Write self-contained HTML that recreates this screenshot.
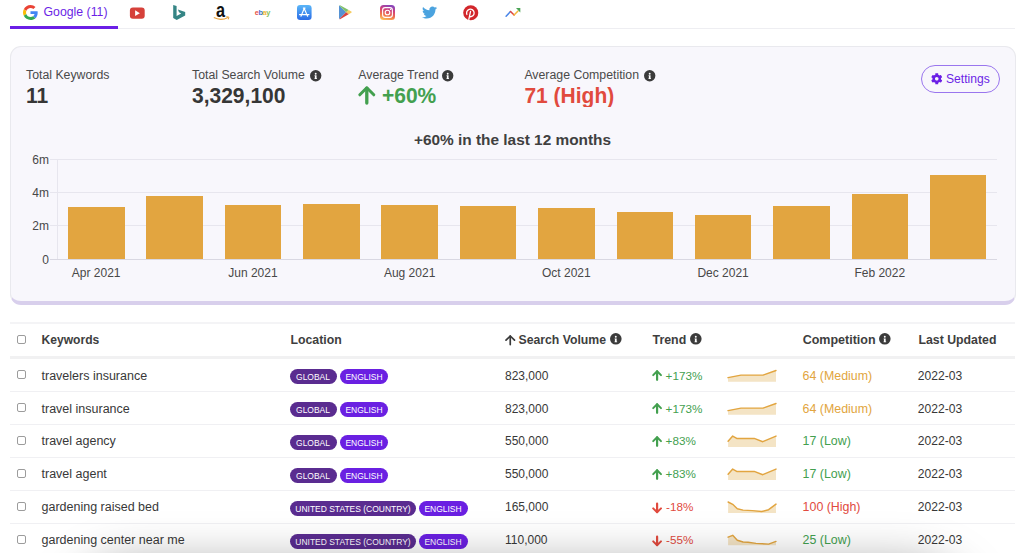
<!DOCTYPE html>
<html><head><meta charset="utf-8"><style>
*{box-sizing:border-box;margin:0;padding:0}
html,body{width:1024px;height:553px;overflow:hidden;background:#fff;font-family:"Liberation Sans",sans-serif;color:#333}
.a{position:absolute;white-space:nowrap}
.s{position:absolute;overflow:visible}
.lbl{font-size:12.3px;color:#4a4a4a;top:67.5px}
.val{font-size:21px;font-weight:bold;color:#363636;top:83.5px;transform:scaleY(1.06);transform-origin:0 100%}
.grid{position:absolute;left:50px;width:947px;height:1px;background:#e7e6ee}
.ylab{position:absolute;left:9px;width:40px;text-align:right;font-size:12px;color:#484848}
.bar{position:absolute;width:56.5px;background:#e2a540}
.xlab{position:absolute;width:100px;text-align:center;font-size:12px;color:#484848;top:266px}
.th{font-weight:bold;color:#3e3e3e;top:332.8px}
.hr{position:absolute;left:10px;width:1005px;height:1px;background:#f0f0f3}
.cb{position:absolute;left:16.8px;width:9.6px;height:9.6px;border:1px solid #9c9c9c;border-radius:2px;background:#fff}
.td{color:#383838}
.badge{position:absolute;height:15px;border-radius:7.5px;color:#fff;line-height:15px;text-align:center;white-space:nowrap;overflow:visible}
.badge span{position:absolute;left:50%;top:0.2px;font-size:9.7px;transform:translateX(-50%) scaleX(0.875);transform-origin:50% 50%}
.b1{background:#5a2c90}
.b2{background:#6a20e2}
.up{color:#43a04f}
.dn{color:#e14a3e}
.med{color:#e2a540}
</style></head><body>
<div class="a" style="left:10px;top:28px;width:1005px;height:1px;background:#eeeef2"></div>
<div class="a" style="left:10px;top:26px;width:108px;height:2.6px;background:#6b1fe6"></div>
<div class="a" style="left:43.5px;top:5px;font-size:12.3px;color:#6b1fe6">Google (11)</div>
<svg class="s" style="left:22.5px;top:5px" width="15" height="15" viewBox="0 0 48 48"><path fill="#EA4335" d="M24 9.5c3.54 0 6.71 1.22 9.21 3.6l6.85-6.85C35.9 2.38 30.47 0 24 0 14.62 0 6.51 5.38 2.56 13.22l7.98 6.19C12.43 13.72 17.74 9.5 24 9.5z"/><path fill="#4285F4" d="M46.98 24.55c0-1.57-.15-3.09-.38-4.55H24v9.02h12.94c-.58 2.96-2.26 5.48-4.78 7.18l7.73 6c4.51-4.18 7.09-10.36 7.09-17.65z"/><path fill="#FBBC05" d="M10.53 28.59c-.48-1.45-.76-2.99-.76-4.59s.27-3.14.76-4.59l-7.98-6.19C.92 16.46 0 20.12 0 24c0 3.88.92 7.54 2.56 10.78l7.97-6.19z"/><path fill="#34A853" d="M24 48c6.48 0 11.93-2.13 15.89-5.81l-7.73-6c-2.15 1.45-4.92 2.3-8.16 2.3-6.26 0-11.57-4.22-13.47-9.91l-7.98 6.19C6.51 42.62 14.62 48 24 48z"/></svg>
<svg class="s" style="left:129px;top:6.5px" width="16" height="12" viewBox="0 0 16 12"><rect x="0.9" y="0.5" width="14.8" height="11.3" rx="3" fill="#d6413a"/><path d="M6.1 3.3 L10.9 6.2 L6.1 9.1 Z" fill="#fff"/></svg>
<svg class="s" style="left:173px;top:5px" width="13" height="15" viewBox="0 0 13 15"><path fill="#358585" d="M0.2 0 L3.6 1.1 V10.9 L8.2 8.4 L6 7.3 L4.9 4.6 L12.2 7 V10.4 L3.7 15 L0.2 13 Z"/></svg>
<div class="a" style="left:215.6px;top:-1px;font-size:15.5px;line-height:18px;font-weight:bold;color:#111;transform:scaleX(1.05) scaleY(1.27);transform-origin:0 0">a</div>
<svg class="s" style="left:212.5px;top:14.8px" width="17" height="6" viewBox="0 0 17 6"><path d="M0.8 2.6 Q8 6.2 15 2.4" stroke="#e9a23b" stroke-width="1.1" fill="none"/><path d="M13.3 1.7 L15.9 2.1 L15.3 4.4" stroke="#e9a23b" stroke-width="1" fill="none"/></svg>
<div class="a" style="left:254.8px;top:8.4px;font-size:7.4px;letter-spacing:-0.45px;font-weight:bold"><span style="color:#e8534a">e</span><span style="color:#3b6fd0">b</span><span style="color:#f0b73a">a</span><span style="color:#86bf5a">y</span></div>
<svg class="s" style="left:296.6px;top:5.1px" width="14.6" height="15" viewBox="0 0 15 15" preserveAspectRatio="none"><defs><linearGradient id="ap" x1="0" y1="0" x2="0" y2="1"><stop offset="0" stop-color="#5ab6f8"/><stop offset="1" stop-color="#2b6ce6"/></linearGradient></defs><rect width="15" height="15" rx="3.3" fill="url(#ap)"/><path d="M7.4 3.6 L4.1 11.2 M7.4 3.6 L10.9 11.2 M2.6 9.6 H12.3 M6.5 3.1 H8.3" stroke="#fff" stroke-width="1.15" stroke-linecap="round" fill="none"/></svg>
<svg class="s" style="left:339.1px;top:5.4px" width="13" height="14.4" viewBox="0 0 14 15" preserveAspectRatio="none"><path d="M0.4 0.4 L7.6 7.5 L0.4 14.6 Q0 14.2 0 13.6 V1.4 Q0 0.8 0.4 0.4Z" fill="#5592d3"/><path d="M0.4 0.4 Q0.9 0 1.6 0.4 L10.4 5.3 L7.6 7.5Z" fill="#80c06a"/><path d="M10.4 5.3 L13.3 6.9 Q14 7.5 13.3 8.1 L10.4 9.7 L7.6 7.5Z" fill="#f5cc62"/><path d="M0.4 14.6 L7.6 7.5 L10.4 9.7 L1.6 14.6 Q0.9 15 0.4 14.6Z" fill="#d9433e"/></svg>
<svg class="s" style="left:380px;top:5px" width="15" height="15" viewBox="0 0 15 15"><defs><linearGradient id="ig" x1="0.2" y1="1" x2="0.5" y2="0"><stop offset="0" stop-color="#fdc45a"/><stop offset="0.35" stop-color="#f0744a"/><stop offset="0.7" stop-color="#d23f7a"/><stop offset="1" stop-color="#8a45b8"/></linearGradient></defs><rect width="15" height="15" rx="3.5" fill="url(#ig)"/><rect x="2.6" y="2.6" width="9.8" height="9.8" rx="2.6" stroke="#fff" stroke-width="1.1" fill="none"/><circle cx="7.5" cy="7.5" r="2.3" stroke="#fff" stroke-width="1.1" fill="none"/><circle cx="10.6" cy="4.4" r="0.6" fill="#fff"/></svg>
<svg class="s" style="left:421.5px;top:6px" width="15" height="13" viewBox="0 0 24 19.5"><path fill="#4ba3df" d="M24 2.3c-.9.4-1.8.6-2.8.8 1-.6 1.8-1.6 2.2-2.7-.9.6-2 1-3.1 1.2C19.4.6 18.1 0 16.7 0c-2.7 0-4.9 2.2-4.9 4.9 0 .4 0 .8.1 1.1C7.7 5.8 4.1 3.9 1.7.9c-.4.7-.7 1.6-.7 2.5 0 1.7.9 3.2 2.2 4.1-.8 0-1.6-.2-2.2-.6v.1c0 2.4 1.7 4.4 3.9 4.8-.4.1-.8.2-1.3.2-.3 0-.6 0-.9-.1.6 2 2.4 3.4 4.6 3.4-1.7 1.3-3.8 2.1-6.1 2.1-.4 0-.8 0-1.2-.1 2.2 1.4 4.8 2.2 7.5 2.2 9.1 0 14-7.5 14-14v-.6c1-.7 1.8-1.6 2.5-2.5z"/></svg>
<svg class="s" style="left:463px;top:5px" width="15.5" height="15.5" viewBox="0 0 16 16"><circle cx="8" cy="8" r="7.8" fill="#d2262b"/><path d="M4.22 10.15 A3.9 3.9 0 1 1 6.92 12.04" stroke="#fff" stroke-width="1.35" fill="none"/><path d="M7.8 6.5 L6.0 14.8" stroke="#fff" stroke-width="1.3" stroke-linecap="round"/></svg>
<svg class="s" style="left:504.5px;top:7px" width="17" height="11" viewBox="0 0 17 11"><path d="M1.1 9.2 L5.5 4.5" stroke="#4a86e8" stroke-width="1.5" stroke-linecap="round"/><path d="M5.5 4.5 L9.1 8" stroke="#e0453c" stroke-width="1.5" stroke-linecap="round"/><path d="M9.1 8 L13 4" stroke="#f4b93c" stroke-width="1.5" stroke-linecap="round"/><path d="M11 1.1 H15.3 V5.5 Z" fill="#4aa455"/></svg>
<div class="a" style="left:10px;top:46px;width:1006px;height:259px;background:#f8f7fc;border:1px solid #e9e9ee;border-bottom:4px solid #d8cfec;border-radius:11px"></div>
<div class="a lbl" style="left:26px">Total Keywords</div>
<div class="a val" style="left:26px">11</div>
<div class="a lbl" style="left:192px">Total Search Volume</div>
<svg class="s" style="left:309.8px;top:70.4px" width="11.4" height="11.4" viewBox="0 0 12 12"><circle cx="6" cy="6" r="6" fill="#3b3b3b"/><circle cx="6" cy="3.9" r="1.0" fill="#fff"/><path d="M4.8 5.6 H6.9 V8.7 H7.4 V9.6 H4.7 V8.7 H5.1 V6.4 H4.8 Z" fill="#fff"/></svg>
<div class="a val" style="left:192px">3,329,100</div>
<div class="a lbl" style="left:358.3px">Average Trend</div>
<svg class="s" style="left:441.9px;top:70.4px" width="11.4" height="11.4" viewBox="0 0 12 12"><circle cx="6" cy="6" r="6" fill="#3b3b3b"/><circle cx="6" cy="3.9" r="1.0" fill="#fff"/><path d="M4.8 5.6 H6.9 V8.7 H7.4 V9.6 H4.7 V8.7 H5.1 V6.4 H4.8 Z" fill="#fff"/></svg>
<svg class="s" style="left:358.3px;top:85.8px" width="17.6" height="18.1" viewBox="0 0 17.6 18.1"><path d="M8.8 2.0999999999999996 V17.05" stroke="#43a04f" stroke-width="3.3000000000000003" stroke-linecap="round" fill="none"/><path d="M1.7999999999999998 8.8 L8.8 1.7999999999999998 L15.8 8.8" stroke="#43a04f" stroke-width="3.0" stroke-linecap="round" stroke-linejoin="round" fill="none"/></svg>
<div class="a val" style="left:382px;color:#43a04f">+60%</div>
<div class="a lbl" style="left:524.4px">Average Competition</div>
<svg class="s" style="left:644.4px;top:70.4px" width="11.4" height="11.4" viewBox="0 0 12 12"><circle cx="6" cy="6" r="6" fill="#3b3b3b"/><circle cx="6" cy="3.9" r="1.0" fill="#fff"/><path d="M4.8 5.6 H6.9 V8.7 H7.4 V9.6 H4.7 V8.7 H5.1 V6.4 H4.8 Z" fill="#fff"/></svg>
<div class="a val" style="left:524.4px;color:#e14a3e">71 (High)</div>
<div class="a" style="left:921px;top:65px;width:79px;height:28px;border:1px solid #9a76ee;border-radius:14px"></div>
<div class="a" style="left:946px;top:72.3px;font-size:12.1px;color:#6b1fe6">Settings</div>
<svg class="s" style="left:931px;top:73px" width="11.5" height="11.5" viewBox="0 0 512 512"><path fill="#6b1fe6" d="M487.4 315.7l-42.6-24.6c4.3-23.2 4.3-47 0-70.2l42.6-24.6c4.9-2.8 7.1-8.6 5.5-14-11.1-35.6-30-67.8-54.7-94.6-3.8-4.1-10-5.1-14.8-2.3L380.8 110c-17.9-15.4-38.5-27.3-60.8-35.1V25.8c0-5.6-3.9-10.5-9.4-11.7-36.7-8.2-74.3-7.8-109.2 0-5.5 1.2-9.4 6.1-9.4 11.7V75c-22.2 7.9-42.8 19.8-60.8 35.1L88.7 85.5c-4.9-2.8-11-1.9-14.8 2.3-24.7 26.7-43.6 58.9-54.7 94.6-1.7 5.4.6 11.2 5.5 14L67.3 221c-4.3 23.2-4.3 47 0 70.2l-42.6 24.6c-4.9 2.8-7.1 8.6-5.5 14 11.1 35.6 30 67.8 54.7 94.6 3.8 4.1 10 5.1 14.8 2.3l42.6-24.6c17.9 15.4 38.5 27.3 60.8 35.1v49.2c0 5.6 3.9 10.5 9.4 11.7 36.7 8.2 74.3 7.8 109.2 0 5.5-1.2 9.4-6.1 9.4-11.7v-49.2c22.2-7.9 42.8-19.8 60.8-35.1l42.6 24.6c4.9 2.8 11 1.9 14.8-2.3 24.7-26.7 43.6-58.9 54.7-94.6 1.5-5.5-.7-11.3-5.6-14.1zM256 336c-44.1 0-80-35.9-80-80s35.9-80 80-80 80 35.9 80 80-35.9 80-80 80z"/></svg>
<div class="a" style="left:0;width:1025px;text-align:center;top:130.5px;font-size:15.4px;font-weight:bold;color:#404040">+60% in the last 12 months</div>
<div class="grid" style="top:159px"></div>
<div class="grid" style="top:192px"></div>
<div class="grid" style="top:225px"></div>
<div class="grid" style="top:258.5px;height:1.3px;background:#d9d8e2"></div>
<div class="a" style="left:56.6px;top:159px;width:1px;height:100px;background:#e7e6ee"></div>
<div class="ylab" style="top:152.6px">6m</div>
<div class="ylab" style="top:185.6px">4m</div>
<div class="ylab" style="top:219.1px">2m</div>
<div class="ylab" style="top:252.6px">0</div>
<div class="bar" style="left:68.0px;top:206.6px;height:52.400000000000006px"></div>
<div class="bar" style="left:146.36px;top:195.8px;height:63.19999999999999px"></div>
<div class="bar" style="left:224.72px;top:205.1px;height:53.900000000000006px"></div>
<div class="bar" style="left:303.08px;top:204.4px;height:54.599999999999994px"></div>
<div class="bar" style="left:381.44px;top:205.1px;height:53.900000000000006px"></div>
<div class="bar" style="left:459.8px;top:206.1px;height:52.900000000000006px"></div>
<div class="bar" style="left:538.16px;top:207.6px;height:51.400000000000006px"></div>
<div class="bar" style="left:616.52px;top:212px;height:47px"></div>
<div class="bar" style="left:694.88px;top:214.8px;height:44.19999999999999px"></div>
<div class="bar" style="left:773.24px;top:206.3px;height:52.69999999999999px"></div>
<div class="bar" style="left:851.6px;top:193.5px;height:65.5px"></div>
<div class="bar" style="left:929.96px;top:175px;height:84px"></div>
<div class="xlab" style="left:46.2px">Apr 2021</div>
<div class="xlab" style="left:202.92px">Jun 2021</div>
<div class="xlab" style="left:359.64px">Aug 2021</div>
<div class="xlab" style="left:516.36px">Oct 2021</div>
<div class="xlab" style="left:673.08px">Dec 2021</div>
<div class="xlab" style="left:829.8000000000001px">Feb 2022</div>
<div class="hr" style="top:322.2px;height:1.7px;background:#f4f4f6"></div>
<div class="a" style="left:10px;top:355.5px;width:1005px;height:3.6px;background:#f1f1f2"></div>
<div class="cb" style="top:334.5px"></div>
<div class="a th" style="left:41.5px;font-size:12.1px">Keywords</div>
<div class="a th" style="left:290.5px;font-size:12.3px">Location</div>
<div class="a th" style="left:518.5px;font-size:12.24px">Search Volume</div>
<div class="a th" style="left:652.5px;font-size:12.4px">Trend</div>
<div class="a th" style="left:802.7px;font-size:12.5px">Competition</div>
<div class="a th" style="left:918.5px;font-size:12.3px">Last Updated</div>
<svg class="s" style="left:610.3px;top:333.4px" width="11.6" height="11.6" viewBox="0 0 12 12"><circle cx="6" cy="6" r="6" fill="#3b3b3b"/><circle cx="6" cy="3.9" r="1.0" fill="#fff"/><path d="M4.8 5.6 H6.9 V8.7 H7.4 V9.6 H4.7 V8.7 H5.1 V6.4 H4.8 Z" fill="#fff"/></svg>
<svg class="s" style="left:689.6px;top:333.4px" width="11.6" height="11.6" viewBox="0 0 12 12"><circle cx="6" cy="6" r="6" fill="#3b3b3b"/><circle cx="6" cy="3.9" r="1.0" fill="#fff"/><path d="M4.8 5.6 H6.9 V8.7 H7.4 V9.6 H4.7 V8.7 H5.1 V6.4 H4.8 Z" fill="#fff"/></svg>
<svg class="s" style="left:879.4px;top:333.4px" width="11.6" height="11.6" viewBox="0 0 12 12"><circle cx="6" cy="6" r="6" fill="#3b3b3b"/><circle cx="6" cy="3.9" r="1.0" fill="#fff"/><path d="M4.8 5.6 H6.9 V8.7 H7.4 V9.6 H4.7 V8.7 H5.1 V6.4 H4.8 Z" fill="#fff"/></svg>
<svg class="s" style="left:504.8px;top:335.3px" width="10.5" height="10" viewBox="0 0 10.5 10"><path d="M5.25 1 V9.6" stroke="#3a3a3a" stroke-width="1.7" fill="none" stroke-linecap="round"/><path d="M1 5.2 L5.25 1 L9.5 5.2" stroke="#3a3a3a" stroke-width="1.7" fill="none" stroke-linecap="round" stroke-linejoin="round"/></svg>
<div class="cb" style="top:369.9px"></div>
<div class="a td" style="left:41.5px;top:368.7px;font-size:12.5px">travelers insurance</div>
<div class="badge b1" style="left:290.2px;top:368.6px;width:46.4px"><span>GLOBAL</span></div>
<div class="badge b2" style="left:339.7px;top:368.6px;width:48.6px"><span>ENGLISH</span></div>
<div class="a td" style="left:505px;top:368.7px;font-size:12px">823,000</div>
<svg class="s" style="left:651.8px;top:370.3px" width="10.2" height="10.5" viewBox="0 0 10.2 10.5"><path d="M5.1 1.4 V9.8" stroke="#43a04f" stroke-width="2.2" stroke-linecap="round" fill="none"/><path d="M1.2 5.1 L5.1 1.2 L9.0 5.1" stroke="#43a04f" stroke-width="2.0" stroke-linecap="round" stroke-linejoin="round" fill="none"/></svg>
<div class="a td up" style="left:665.6px;top:368.7px;font-size:11.7px">+173%</div>
<div class="a td med" style="left:802.6px;top:368.7px;font-size:12.4px">64 (Medium)</div>
<div class="a td" style="left:917.8px;top:368.7px;font-size:12.1px">2022-03</div>
<svg class="s" style="left:728px;top:367px" width="49" height="17" viewBox="0 0 49 17"><path d="M0.00 10.60 L13.00 8.10 L35.00 8.10 L48.00 3.50 L48.00 14.70 L0.00 14.70 Z" fill="#f4e4c5"/><path d="M0.00 10.60 L13.00 8.10 L35.00 8.10 L48.00 3.50" stroke="#e2a540" stroke-width="1.45" fill="none" stroke-linejoin="round" stroke-linecap="round"/></svg>
<div class="hr" style="top:391.3px"></div>
<div class="cb" style="top:402.9px"></div>
<div class="a td" style="left:41.5px;top:401.55px;font-size:12.5px">travel insurance</div>
<div class="badge b1" style="left:290.2px;top:401.6px;width:46.4px"><span>GLOBAL</span></div>
<div class="badge b2" style="left:339.7px;top:401.6px;width:48.6px"><span>ENGLISH</span></div>
<div class="a td" style="left:505px;top:401.55px;font-size:12px">823,000</div>
<svg class="s" style="left:651.8px;top:403.3px" width="10.2" height="10.5" viewBox="0 0 10.2 10.5"><path d="M5.1 1.4 V9.8" stroke="#43a04f" stroke-width="2.2" stroke-linecap="round" fill="none"/><path d="M1.2 5.1 L5.1 1.2 L9.0 5.1" stroke="#43a04f" stroke-width="2.0" stroke-linecap="round" stroke-linejoin="round" fill="none"/></svg>
<div class="a td up" style="left:665.6px;top:401.55px;font-size:11.7px">+173%</div>
<div class="a td med" style="left:802.6px;top:401.55px;font-size:12.4px">64 (Medium)</div>
<div class="a td" style="left:917.8px;top:401.55px;font-size:12.1px">2022-03</div>
<svg class="s" style="left:728px;top:400px" width="49" height="17" viewBox="0 0 49 17"><path d="M0.00 10.60 L13.00 8.10 L35.00 8.10 L48.00 3.50 L48.00 14.70 L0.00 14.70 Z" fill="#f4e4c5"/><path d="M0.00 10.60 L13.00 8.10 L35.00 8.10 L48.00 3.50" stroke="#e2a540" stroke-width="1.45" fill="none" stroke-linejoin="round" stroke-linecap="round"/></svg>
<div class="hr" style="top:424.3px"></div>
<div class="cb" style="top:435.9px"></div>
<div class="a td" style="left:41.5px;top:434.4px;font-size:12.5px">travel agency</div>
<div class="badge b1" style="left:290.2px;top:434.6px;width:46.4px"><span>GLOBAL</span></div>
<div class="badge b2" style="left:339.7px;top:434.6px;width:48.6px"><span>ENGLISH</span></div>
<div class="a td" style="left:505px;top:434.4px;font-size:12px">550,000</div>
<svg class="s" style="left:651.8px;top:436.3px" width="10.2" height="10.5" viewBox="0 0 10.2 10.5"><path d="M5.1 1.4 V9.8" stroke="#43a04f" stroke-width="2.2" stroke-linecap="round" fill="none"/><path d="M1.2 5.1 L5.1 1.2 L9.0 5.1" stroke="#43a04f" stroke-width="2.0" stroke-linecap="round" stroke-linejoin="round" fill="none"/></svg>
<div class="a td up" style="left:665.6px;top:434.4px;font-size:11.7px">+83%</div>
<div class="a td up" style="left:802.6px;top:434.4px;font-size:12.4px">17 (Low)</div>
<div class="a td" style="left:917.8px;top:434.4px;font-size:12.1px">2022-03</div>
<svg class="s" style="left:728px;top:433px" width="49" height="17" viewBox="0 0 49 17"><path d="M0.10 8.20 L4.70 3.10 L8.70 5.40 L26.20 5.40 L34.80 8.70 L48.00 3.10 L48.00 14.00 L0.10 14.00 Z" fill="#f4e4c5"/><path d="M0.10 8.20 L4.70 3.10 L8.70 5.40 L26.20 5.40 L34.80 8.70 L48.00 3.10" stroke="#e2a540" stroke-width="1.45" fill="none" stroke-linejoin="round" stroke-linecap="round"/></svg>
<div class="hr" style="top:457.3px"></div>
<div class="cb" style="top:468.9px"></div>
<div class="a td" style="left:41.5px;top:467.25px;font-size:12.5px">travel agent</div>
<div class="badge b1" style="left:290.2px;top:467.6px;width:46.4px"><span>GLOBAL</span></div>
<div class="badge b2" style="left:339.7px;top:467.6px;width:48.6px"><span>ENGLISH</span></div>
<div class="a td" style="left:505px;top:467.25px;font-size:12px">550,000</div>
<svg class="s" style="left:651.8px;top:469.3px" width="10.2" height="10.5" viewBox="0 0 10.2 10.5"><path d="M5.1 1.4 V9.8" stroke="#43a04f" stroke-width="2.2" stroke-linecap="round" fill="none"/><path d="M1.2 5.1 L5.1 1.2 L9.0 5.1" stroke="#43a04f" stroke-width="2.0" stroke-linecap="round" stroke-linejoin="round" fill="none"/></svg>
<div class="a td up" style="left:665.6px;top:467.25px;font-size:11.7px">+83%</div>
<div class="a td up" style="left:802.6px;top:467.25px;font-size:12.4px">17 (Low)</div>
<div class="a td" style="left:917.8px;top:467.25px;font-size:12.1px">2022-03</div>
<svg class="s" style="left:728px;top:466px" width="49" height="17" viewBox="0 0 49 17"><path d="M0.10 8.20 L4.70 3.10 L8.70 5.40 L26.20 5.40 L34.80 8.70 L48.00 3.10 L48.00 14.00 L0.10 14.00 Z" fill="#f4e4c5"/><path d="M0.10 8.20 L4.70 3.10 L8.70 5.40 L26.20 5.40 L34.80 8.70 L48.00 3.10" stroke="#e2a540" stroke-width="1.45" fill="none" stroke-linejoin="round" stroke-linecap="round"/></svg>
<div class="hr" style="top:490.3px"></div>
<div class="cb" style="top:501.9px"></div>
<div class="a td" style="left:41.5px;top:500.09999999999997px;font-size:12.5px">gardening raised bed</div>
<div class="badge b1" style="left:290.2px;top:500.6px;width:125.8px"><span>UNITED STATES (COUNTRY)</span></div>
<div class="badge b2" style="left:419.1px;top:500.6px;width:48.6px"><span>ENGLISH</span></div>
<div class="a td" style="left:505px;top:500.09999999999997px;font-size:12px">165,000</div>
<svg class="s" style="left:651.8px;top:502.8px" width="10.2" height="10.5" viewBox="0 0 10.2 10.5"><path d="M5.1 0.7 V9.1" stroke="#e14a3e" stroke-width="2.2" stroke-linecap="round" fill="none"/><path d="M1.2 5.4 L5.1 9.3 L9.0 5.4" stroke="#e14a3e" stroke-width="2.0" stroke-linecap="round" stroke-linejoin="round" fill="none"/></svg>
<div class="a td dn" style="left:666px;top:500.09999999999997px;font-size:11.7px">-18%</div>
<div class="a td dn" style="left:802.6px;top:500.09999999999997px;font-size:12.4px">100 (High)</div>
<div class="a td" style="left:917.8px;top:500.09999999999997px;font-size:12.1px">2022-03</div>
<svg class="s" style="left:728px;top:499px" width="49" height="17" viewBox="0 0 49 17"><path d="M0.10 3.00 L4.70 5.30 L9.30 9.70 L15.10 11.10 L24.40 11.60 L33.60 12.50 L40.60 10.70 L48.00 5.10 L48.00 13.90 L0.10 13.90 Z" fill="#f4e4c5"/><path d="M0.10 3.00 L4.70 5.30 L9.30 9.70 L15.10 11.10 L24.40 11.60 L33.60 12.50 L40.60 10.70 L48.00 5.10" stroke="#e2a540" stroke-width="1.45" fill="none" stroke-linejoin="round" stroke-linecap="round"/></svg>
<div class="hr" style="top:523.3px"></div>
<div class="cb" style="top:534.9px"></div>
<div class="a td" style="left:41.5px;top:532.95px;font-size:12.5px">gardening center near me</div>
<div class="badge b1" style="left:290.2px;top:533.6px;width:125.8px"><span>UNITED STATES (COUNTRY)</span></div>
<div class="badge b2" style="left:419.1px;top:533.6px;width:48.6px"><span>ENGLISH</span></div>
<div class="a td" style="left:505px;top:532.95px;font-size:12px">110,000</div>
<svg class="s" style="left:651.8px;top:535.8px" width="10.2" height="10.5" viewBox="0 0 10.2 10.5"><path d="M5.1 0.7 V9.1" stroke="#e14a3e" stroke-width="2.2" stroke-linecap="round" fill="none"/><path d="M1.2 5.4 L5.1 9.3 L9.0 5.4" stroke="#e14a3e" stroke-width="2.0" stroke-linecap="round" stroke-linejoin="round" fill="none"/></svg>
<div class="a td dn" style="left:666px;top:532.95px;font-size:11.7px">-55%</div>
<div class="a td up" style="left:802.6px;top:532.95px;font-size:12.4px">25 (Low)</div>
<div class="a td" style="left:917.8px;top:532.95px;font-size:12.1px">2022-03</div>
<svg class="s" style="left:728px;top:532px" width="49" height="17" viewBox="0 0 49 17"><path d="M0.10 5.20 L4.70 3.30 L9.30 8.20 L15.10 10.00 L20.00 10.30 L28.00 11.40 L40.60 12.10 L48.00 9.40 L48.00 13.30 L0.10 13.30 Z" fill="#f4e4c5"/><path d="M0.10 5.20 L4.70 3.30 L9.30 8.20 L15.10 10.00 L20.00 10.30 L28.00 11.40 L40.60 12.10 L48.00 9.40" stroke="#e2a540" stroke-width="1.45" fill="none" stroke-linejoin="round" stroke-linecap="round"/></svg>
<div class="a" style="left:90px;top:584px;width:860px;height:100px;border-radius:40px;box-shadow:0 0 50px 18px rgba(0,0,0,0.40)"></div>
</body></html>
